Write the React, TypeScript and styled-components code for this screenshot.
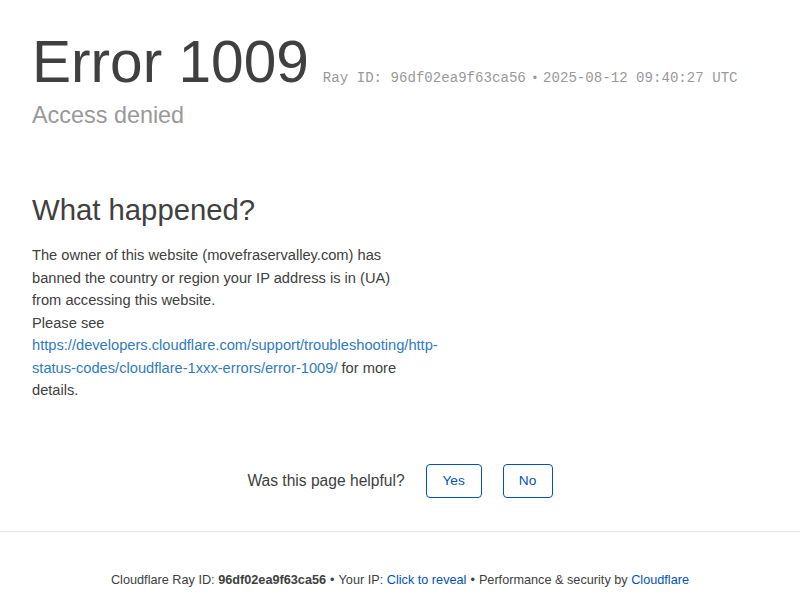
import styled, { createGlobalStyle } from 'styled-components';

const GlobalStyle = createGlobalStyle`
  html, body {
    margin: 0;
    padding: 0;
    background: #fff;
  }
  body {
    font-family: "Liberation Sans", Arial, sans-serif;
    color: #404040;
  }
`;

const Page = styled.div`
  width: 800px;
`;

const Header = styled.header`
  padding: 26px 32px 0;
`;

const TitleRow = styled.div`
  display: flex;
  align-items: baseline;
`;

const Title = styled.h1`
  margin: 0 14px 0 0;
  font-size: 58.6px;
  font-weight: 400;
  line-height: 72px;
  color: #404040;
`;

const RayInfo = styled.span`
  font-family: "Liberation Mono", "Courier New", monospace;
  font-size: 14.1px;
  color: #999;
`;

const Dot = styled.span`
  margin: 0 6px 0 7px;
  font-family: "Liberation Sans", Arial, sans-serif;
  font-size: 12px;
`;

const Subtitle = styled.h2`
  margin: 2px 0 0;
  font-size: 23.4px;
  font-weight: 400;
  line-height: 30px;
  color: #999;
`;

const Section = styled.section`
  padding: 0 32px;
  margin-top: 62px;
  width: 368px;
`;

const SectionTitle = styled.h2`
  margin: 0 0 16px;
  font-size: 29.3px;
  font-weight: 400;
  line-height: 36px;
  color: #404040;
`;

const Text = styled.p`
  margin: 0;
  font-size: 14.67px;
  line-height: 22.5px;
  color: #404040;
`;

const InlineLink = styled.a`
  color: #2f7bbf;
  text-decoration: none;
`;

const Feedback = styled.div`
  display: flex;
  justify-content: center;
  align-items: center;
  gap: 21px;
  margin-top: 62px;
  padding-bottom: 33px;
  border-bottom: 1px solid #e6e6e6;
`;

const FeedbackLabel = styled.span`
  font-size: 15.6px;
  color: #404040;
`;

const Buttons = styled.div`
  display: flex;
  gap: 21px;
`;

const FeedbackButton = styled.button<{ $width: number }>`
  width: ${({ $width }) => $width}px;
  height: 34px;
  background: #fff;
  border: 1px solid #0051c3;
  border-radius: 4px;
  color: #0051c3;
  font-family: "Liberation Sans", Arial, sans-serif;
  font-size: 13.7px;
  padding: 0;
  cursor: pointer;
`;

const Footer = styled.footer`
  text-align: center;
  font-size: 12.7px;
  color: #404040;
  padding-top: 41px;
`;

const FooterLink = styled.a`
  color: #0051c3;
  text-decoration: none;
`;

const Sep = styled.span`
  margin: 0 4px;
`;

export default function App() {
  return (
    <Page>
      <GlobalStyle />
      <Header>
        <TitleRow>
          <Title>Error 1009</Title>
          <RayInfo>
            Ray ID: 96df02ea9f63ca56<Dot>•</Dot>2025-08-12 09:40:27 UTC
          </RayInfo>
        </TitleRow>
        <Subtitle>Access denied</Subtitle>
      </Header>

      <Section>
        <SectionTitle>What happened?</SectionTitle>
        <Text>
          The owner of this website (movefraservalley.com) has banned the country or region your IP
          address is in (UA) from accessing this website.
          <br />
          Please see{' '}
          <InlineLink href="#">
            https://developers.cloudflare.com/support/troubleshooting/http-status-codes/cloudflare-1xxx-errors/error-1009/
          </InlineLink>{' '}
          for more details.
        </Text>
      </Section>

      <Feedback>
        <FeedbackLabel>Was this page helpful?</FeedbackLabel>
        <Buttons>
          <FeedbackButton $width={56}>Yes</FeedbackButton>
          <FeedbackButton $width={50}>No</FeedbackButton>
        </Buttons>
      </Feedback>

      <Footer>
        Cloudflare Ray ID: <strong>96df02ea9f63ca56</strong>
        <Sep>•</Sep>Your IP: <FooterLink href="#">Click to reveal</FooterLink>
        <Sep>•</Sep>Performance &amp; security by <FooterLink href="#">Cloudflare</FooterLink>
      </Footer>
    </Page>
  );
}
